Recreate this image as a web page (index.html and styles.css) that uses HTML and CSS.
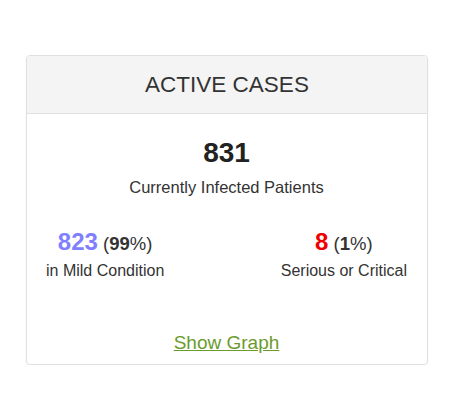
FILE: index.html
```html
<!DOCTYPE html>
<html>
<head>
<meta charset="utf-8">
<link rel="stylesheet" href="styles.css">
</head>
<body>
<div class="card">
  <div class="card-header">ACTIVE CASES</div>
  <div class="card-body">
    <div class="total">831</div>
    <div class="total-label">Currently Infected Patients</div>
    <div class="split">
      <div class="col">
        <div class="val"><span class="num mild">823</span> (<strong>99</strong>%)</div>
        <div class="lbl">in Mild Condition</div>
      </div>
      <div class="col">
        <div class="val"><span class="num crit">8</span> (<strong>1</strong>%)</div>
        <div class="lbl">Serious or Critical</div>
      </div>
    </div>
    <div class="graph"><a href="#">Show Graph</a></div>
  </div>
</div>
</body>
</html>
```

FILE: styles.css
```css
html, body {
  margin: 0;
  padding: 0;
  background: #fff;
}
body {
  font-family: "Liberation Sans", Arial, sans-serif;
  color: #333;
  padding: 55px 34px 0 26px;
}
.card {
  width: 400px;
  border: 1px solid #e0e0e0;
  border-radius: 4px;
  box-shadow: 0 1px 2px rgba(0,0,0,0.06);
  overflow: hidden;
}
.card-header {
  background: #f4f4f4;
  border-bottom: 1px solid #e0e0e0;
  height: 57px;
  display: flex;
  align-items: center;
  justify-content: center;
  font-size: 22.5px;
  color: #333;
}
.card-body {
  padding: 23px 20px 0 19px;
  height: 227px;
  text-align: center;
}
.total {
  font-size: 28px;
  font-weight: bold;
  line-height: 32px;
  color: #222;
}
.total-label {
  font-size: 16.5px;
  margin-top: 9px;
  line-height: 19px;
}
.split {
  display: flex;
  justify-content: space-between;
  margin-top: 32px;
}
.col {
  text-align: center;
}
.val {
  font-size: 18.5px;
  line-height: 26px;
}
.num {
  font-size: 24px;
  font-weight: bold;
}
.mild { color: #8080ff; }
.crit { color: #e00; }
.lbl {
  font-size: 16px;
  line-height: 19px;
  margin-top: 4px;
}
.graph {
  margin-top: 52px;
  font-size: 19px;
}
.graph a {
  color: #6b9b2c;
}
```
